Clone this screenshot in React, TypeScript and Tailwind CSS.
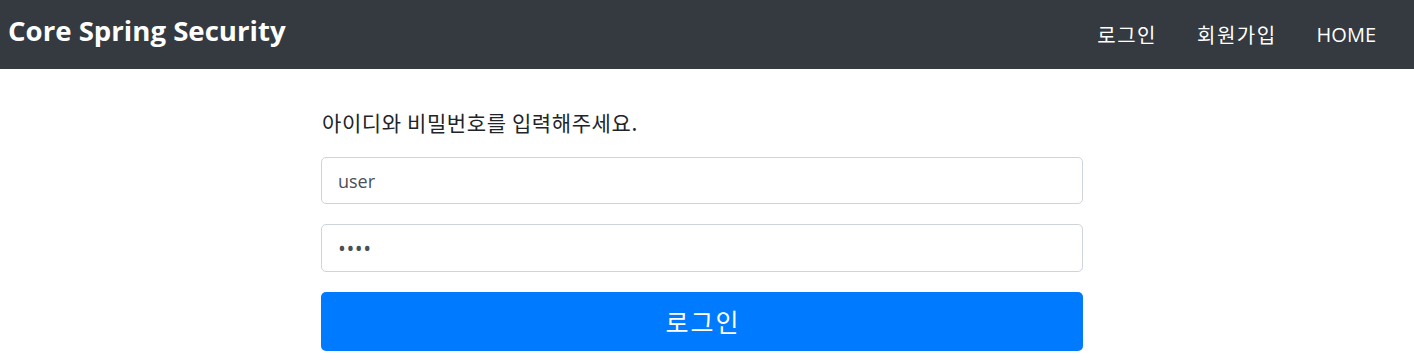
const latin = "font-['Segoe_UI','Open_Sans','Noto_Sans_CJK_KR',sans-serif]"
const hangul = "font-['Noto_Sans_CJK_KR',sans-serif]"

const Header = () => {
    return (
        <header className="flex h-[69px] items-center justify-between bg-[#343a40] pl-2 pr-[38px]">
            <a href="#" className={`${latin} pb-[8px] text-[27.6px] font-bold leading-none text-white`}>
                Core Spring Security
            </a>
            <nav className="flex items-center gap-[40px] text-[20px] text-white">
                <a href="#" className={`${hangul} tracking-[1.5px]`}>로그인</a>
                <a href="#" className={`${hangul} tracking-[1.5px]`}>회원가입</a>
                <a href="#" className={latin}>HOME</a>
            </nav>
        </header>
    )
}

const LoginForm = () => {
    return (
        <div className="flex justify-center pr-[10px] pt-[38px]">
            <form className="flex w-[762px] flex-col" onSubmit={(e) => e.preventDefault()}>
                <p className={`${hangul} mb-[20px] pl-px text-[21px] leading-[30px] tracking-[0.6px] text-[#212529]`}>
                    아이디와 비밀번호를 입력해주세요.
                </p>
                <input
                    type="text"
                    defaultValue="user"
                    className={`${latin} h-[47px] rounded-[5px] border border-[#ced4da] px-4 text-[18px] text-[#495057] outline-none`}
                />
                <input
                    type="password"
                    defaultValue="1111"
                    className={`${latin} mt-[20px] h-[48px] rounded-[5px] border border-[#ced4da] px-4 text-[21px] tracking-[0.5px] text-[#495057] outline-none`}
                />
                <button
                    type="submit"
                    className={`${hangul} mt-[20px] h-[59px] rounded-[5px] bg-[#007bff] pl-[2px] text-[25px] tracking-[2px] text-white`}
                >
                    로그인
                </button>
            </form>
        </div>
    )
}

export default function App() {
    return (
        <div className="min-h-[361px] bg-white">
            <Header />
            <LoginForm />
        </div>
    )
}
